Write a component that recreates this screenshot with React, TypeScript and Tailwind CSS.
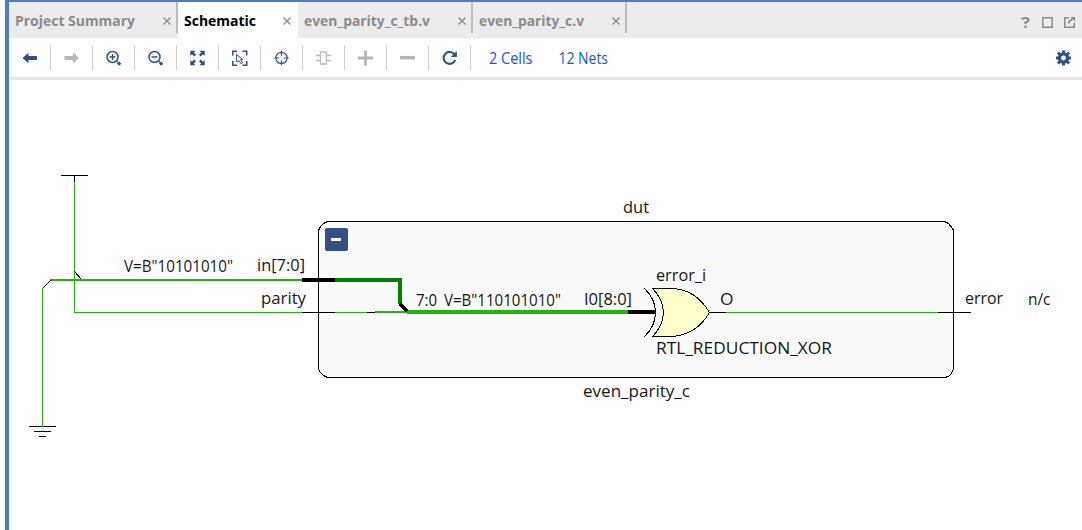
import React from "react";

const NAVY = "#2f4f87";

function Tab({ label, active, width, textLength }: { label: string; active?: boolean; width: string; textLength: number }) {
  return (
    <div className={`relative h-9 shrink-0 ${width} ${active ? "bg-white text-black" : "text-[#8b8b8b]"}`}>
      <svg className="block h-9 w-full overflow-visible" fill="currentColor">
        <text x="6" y="24" fontSize="15" fontWeight="700" textLength={textLength} lengthAdjust="spacingAndGlyphs">
          {label}
        </text>
      </svg>
      <svg className="absolute top-[15px] right-[7px] h-2 w-2" viewBox="0 0 8 8" stroke="#8b8b8b" strokeWidth="1.4">
        <path d="M.5.5l7 7M7.5.5l-7 7" />
      </svg>
      {!active && <div className="absolute top-0 right-0 h-[31px] w-0.5 bg-[#bdbdbd]" />}
    </div>
  );
}

function Tool({ children }: { children: React.ReactNode }) {
  return (
    <div className="flex h-[25px] w-[42px] items-center border-r border-[#d2d2d2] pl-3">
      <svg width="17" height="16" viewBox="-0.5 0 17 16" fill="none" stroke={NAVY}>
        {children}
      </svg>
    </div>
  );
}

function Toolbar() {
  return (
    <div className="flex h-[42px] items-start border-b-[3px] border-[#e6e6e6] bg-white pt-[7px]">
      <Tool>
        <path d="M1 8l6-5.200V6h8.500v4H7v3.200z" fill={NAVY} stroke="none" />
      </Tool>
      <Tool>
        <path d="M15.500 8l-6-5.200V6H1v4h8.500v3.200z" fill="#b5b5b5" stroke="none" />
      </Tool>
      <Tool>
        <circle cx="7" cy="7" r="5.500" strokeWidth="1.500" />
        <path d="M4 7h6M7 4v6" strokeWidth="1.300" />
        <path d="M11 11l1.200 1.200" strokeWidth="1.500" />
        <path d="M12.500 12.500l2.200 2.200" strokeWidth="3" />
      </Tool>
      <Tool>
        <circle cx="7" cy="7" r="5.500" strokeWidth="1.500" />
        <path d="M4 7h6" strokeWidth="1.500" />
        <path d="M11 11l1.200 1.200" strokeWidth="1.500" />
        <path d="M12.500 12.500l2.200 2.200" strokeWidth="3" />
      </Tool>
      <Tool>
        <g fill={NAVY} stroke="none">
          <path d="M.8 .8H6L4.300 2.500L6.500 4.800L4.800 6.500L2.500 4.300L.8 6Z" />
          <path d="M15.200 .8H10L11.700 2.500L9.500 4.800L11.200 6.500L13.500 4.300L15.200 6Z" />
          <path d="M.8 15.200H6L4.300 13.500L6.500 11.200L4.800 9.500L2.500 11.700L.8 10Z" />
          <path d="M15.200 15.200H10L11.700 13.500L9.500 11.200L11.200 9.500L13.500 11.700L15.200 10Z" />
        </g>
      </Tool>
      <Tool>
        <path d="M1.300 5.500V1.300h4.200M11 1.300h4.200v4.200M1.300 11v4.200h4.200M15.200 11v4.200H11" strokeWidth="1.500" />
        <path d="M5 4.500l6.500 5.200H9l2 3-1.500 1-2-3L5.300 12z" strokeWidth="1" />
      </Tool>
      <Tool>
        <circle cx="8" cy="8" r="5.600" strokeWidth="1.200" />
        <path d="M8 .8v5M8 10.200v5M.8 8h5M10.200 8h5" strokeWidth="1.200" />
      </Tool>
      <Tool>
        <path d="M5 2h6v12H5zM.5 5.500H5M.5 10.500H5M11 5.500h4.500M11 10.500h4.500" stroke="#bcbcbc" strokeWidth="1.300" />
      </Tool>
      <Tool>
        <path d="M.5 8h15M8 .5v15" stroke="#b5b5b5" strokeWidth="2.800" />
      </Tool>
      <Tool>
        <path d="M.5 7.700h15" stroke="#b5b5b5" strokeWidth="3.600" />
      </Tool>
      <Tool>
        <path d="M13.200 4.600A6 6 0 1 0 13.800 10" strokeWidth="2.100" />
        <path d="M15.300 1v6H9.300z" fill={NAVY} stroke="none" />
      </Tool>
      <svg className="h-[25px] w-[150px]" fill="#1155ee">
        <text x="18" y="19" fontSize="15.500" textLength="43.500" lengthAdjust="spacingAndGlyphs">2 Cells</text>
        <text x="87.500" y="19" fontSize="15.500" textLength="49.500" lengthAdjust="spacingAndGlyphs">12 Nets</text>
      </svg>
      <svg className="mt-[5px] mr-[10px] ml-auto h-4 w-[17px]" viewBox="-0.5 0 17 16" fill="none" stroke={NAVY}>
        <circle cx="8" cy="8" r="4.100" strokeWidth="3.300" />
        <path d="M8 .5v3M8 12.500v3M.5 8h3M12.500 8h3M2.500 2.500l2 2M11.500 11.500l2 2M13.500 2.500l-2 2M4.500 11.500l-2 2" strokeWidth="3" />
      </svg>
    </div>
  );
}

type LabelProps = { x: number; y: number; w: number; size?: number; children: string };
function Label({ x, y, w, size = 17, children }: LabelProps) {
  return (
    <text x={x} y={y} fontSize={size} textLength={w} lengthAdjust="spacingAndGlyphs" fill="#161616" xmlSpace="preserve">
      {children}
    </text>
  );
}

function Schematic() {
  return (
    <svg className="block h-[450px] w-[1073px]" viewBox="9 80 1073 450" fill="none">
      <g shapeRendering="crispEdges" stroke="#000">
        <path d="M327.500 221.500H944.500L948.500 223.500L952.500 228.500L953.500 230.500V368.500L951.500 373.500L948.500 376.500L944.500 377.500H327.500L323.500 375.500L319.500 371.500L318.500 368.500V230.500L320.500 226.500L323.500 223.500Z" fill="#fafafa" />
        <g stroke="#1fb50a">
          <path d="M74.500 181V312.500H302M42.500 288V427M335 312.500H367M726 312.500H938" />
          <path d="M50 280H302M375 312H407" strokeWidth="2" />
          <path d="M407 312H628" strokeWidth="4" />
        </g>
        <path d="M61 175.500H88M74.500 175V182M29 426.500H56M34 431.500H51M39 436.500H46" />
        <path d="M42.500 288.500L50.500 280.500M74.500 271.500L81.500 279.500" />
        <path d="M302 312.500H335M367 312.500H375M709 312.500H726M938 312.500H971" />
        <path d="M335 280H400V304" stroke="#008000" strokeWidth="4" />
        <path d="M302 280H335M628 312H655" strokeWidth="4" />
        <path d="M400 304L407.500 311.500" strokeWidth="3.500" />
        <path d="M42.500 420V427" stroke="#1fb50a" />
        <path d="M644.500 288.500Q655.500 299 655.500 312.500Q655.500 326 644.500 336.500" />
        <path d="M652.500 288.500H671.500C688 289 701 298 709.500 312.500C701 327 688 335.500 671.500 336.500H652.500C667 322 667 303 652.500 288.500Z" fill="#ffffcc" />
      </g>
      <rect x="325" y="228" width="23" height="23" rx="2" fill="#335087" />
      <path d="M331 239.500H341" stroke="#fff" strokeWidth="3" />
      <Label x={124} y={272} w={109} size={15.5}>V=B"10101010"</Label>
      <Label x={257} y={271} w={48}>in[7:0]</Label>
      <Label x={261} y={304} w={45}>parity</Label>
      <Label x={623} y={213} w={26}>dut</Label>
      <Label x={583} y={397} w={107}>even_parity_c</Label>
      <Label x={416} y={306} w={21} size={15.5}>7:0</Label>
      <Label x={444} y={306} w={117} size={15.5}>V=B"110101010"</Label>
      <Label x={584} y={305} w={48}>I0[8:0]</Label>
      <Label x={656} y={281} w={50}>error_i</Label>
      <Label x={720} y={305} w={13.500}>O</Label>
      <Label x={656} y={354} w={176}>RTL_REDUCTION_XOR</Label>
      <Label x={965} y={304} w={38}>error</Label>
      <Label x={1028} y={305} w={22.500} size={15.5}>n/c</Label>
    </svg>
  );
}

export default function App() {
  return (
    <div className="h-[530px] w-[1082px] overflow-hidden bg-white pl-[5px] font-['Open_Sans','Noto_Sans',sans-serif]">
      <div className="h-[530px] border-t-2 border-l-4 border-[#4a7dcf]">
        <div className="flex h-9 bg-[#ececec]">
          <Tab label="Project Summary" width="w-[169px]" textLength={120} />
          <Tab label="Schematic" active width="w-[120px]" textLength={72} />
          <Tab label="even_parity_c_tb.v" width="w-[175px]" textLength={126} />
          <Tab label="even_parity_c.v" width="w-[154px]" textLength={105} />
          <svg className="mt-3 mr-[6px] ml-auto h-[14px] w-[56px]" fill="none" stroke="#8b8b8b">
            <path d="M1.800 5.500Q2.500 4 5.200 4Q8.500 4 8.500 6Q8.500 7.300 5.500 8.500V10M5.500 11.500V14" strokeWidth="2.200" />
            <path d="M22.800 3.700H32.200V13.200H22.800Z" strokeWidth="1.500" />
            <path d="M49 3.700H44.800V13.200H54.200V9" strokeWidth="1.500" />
            <path d="M48.500 9.500Q49 6.500 52.500 5" strokeWidth="1.500" />
            <path d="M50.500 3H55V7.500Z" fill="#8b8b8b" stroke="none" />
          </svg>
        </div>
        <Toolbar />
        <Schematic />
      </div>
    </div>
  );
}
